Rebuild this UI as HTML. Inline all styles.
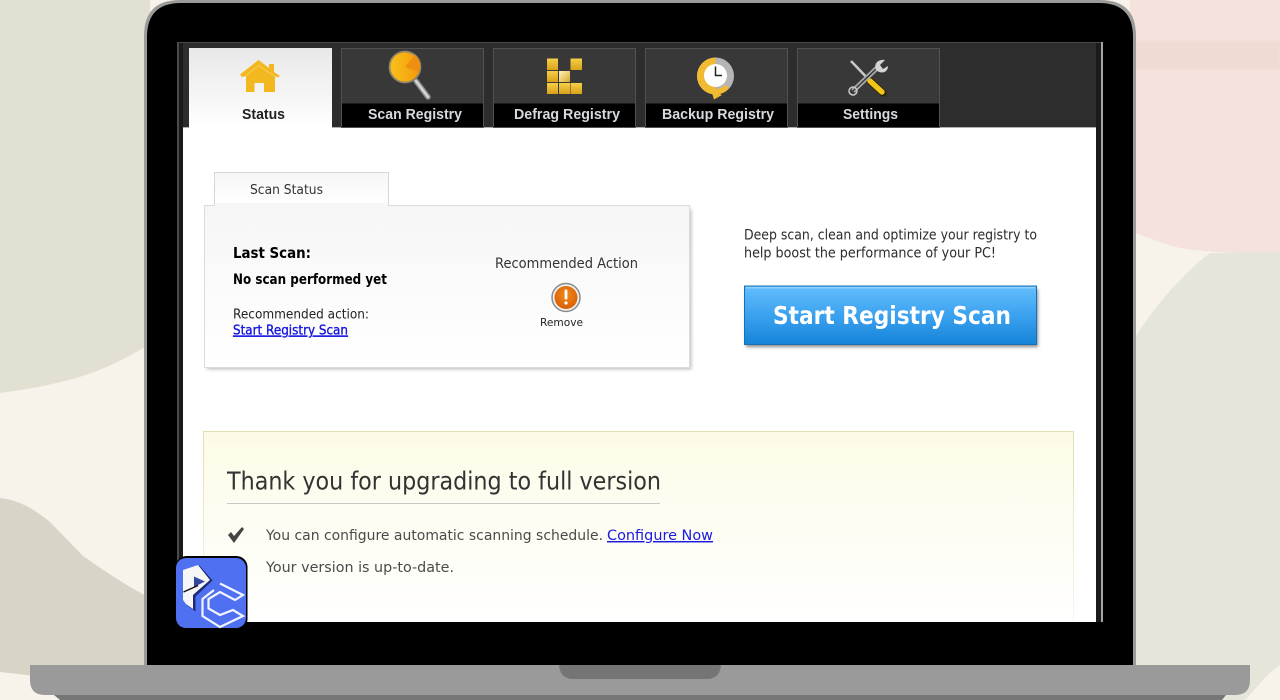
<!DOCTYPE html>
<html><head><meta charset="utf-8"><title>Registry Scan</title>
<style>html,body{margin:0;padding:0;width:1280px;height:700px;overflow:hidden;background:#f8f3ea}svg{display:block}
.d{font-family:"DejaVu Sans",sans-serif}.l{font-family:"Liberation Sans",sans-serif}
</style></head><body>
<svg width="1280" height="700" viewBox="0 0 1280 700" xmlns="http://www.w3.org/2000/svg">
<defs>
<linearGradient id="st" x1="0" y1="0" x2="0" y2="1"><stop offset="0" stop-color="#e8e8e8"/><stop offset=".7" stop-color="#f8f8f8"/><stop offset="1" stop-color="#fff"/></linearGradient>
<linearGradient id="pn" x1="0" y1="0" x2="0" y2="1"><stop offset="0" stop-color="#f6f6f6"/><stop offset="1" stop-color="#fff"/></linearGradient>
<linearGradient id="yl" x1="0" y1="0" x2="0" y2="1"><stop offset="0" stop-color="#fdfbe7"/><stop offset="1" stop-color="#fff"/></linearGradient>
<linearGradient id="bd" x1="0" y1="0" x2="0" y2="1"><stop offset="0" stop-color="#dfdfb0"/><stop offset="1" stop-color="#f6f6f2"/></linearGradient>
<linearGradient id="bt" x1="0" y1="0" x2="0" y2="1"><stop offset="0" stop-color="#63bdfc"/><stop offset=".5" stop-color="#3ba2ef"/><stop offset="1" stop-color="#1684d8"/></linearGradient>
<linearGradient id="mg" x1="0" y1="0" x2="1" y2="0"><stop offset="0" stop-color="#f8c21a"/><stop offset="1" stop-color="#f59a0c"/></linearGradient>
<linearGradient id="sq" x1="0" y1="0" x2="0" y2="1"><stop offset="0" stop-color="#f6cf48"/><stop offset="1" stop-color="#d9a21a"/></linearGradient>
<linearGradient id="sl" x1="0" y1="0" x2="1" y2="1"><stop offset="0" stop-color="#fff3c0"/><stop offset="1" stop-color="#d9a92a"/></linearGradient>
<radialGradient id="ex" cx=".5" cy=".4" r=".6"><stop offset="0" stop-color="#f28a1a"/><stop offset="1" stop-color="#d85f05"/></radialGradient>
<filter id="sh" x="-5%" y="-5%" width="110%" height="110%"><feGaussianBlur stdDeviation="1.500"/></filter>
<filter id="sf" x="-5%" y="-50%" width="110%" height="200%"><feGaussianBlur stdDeviation="1"/></filter>
</defs>

<!-- background -->
<rect width="1280" height="700" fill="#f8f3ea"/>
<path d="M0 0H150V345L143 348C120 362 100 371 73 379C50 385 25 390 0 393Z" fill="#e1e0d2"/>
<path d="M0 498C20 500 35 510 50 522L83 556C100 568 125 585 150 598V680H70L0 672Z" fill="#d9d4c8"/>
<path d="M1130 0H1280V254C1250 254 1200 252 1180 248C1160 243 1145 236 1130 231Z" fill="#f5e2dd"/>
<rect x="1130" y="41" width="150" height="28" fill="#efdad4" filter="url(#sf)"/>
<path d="M1137 335C1155 305 1185 272 1210 253L1280 252V665C1265 675 1255 690 1245 700H1130V340Z" fill="#e5e5da"/>

<!-- laptop -->
<path d="M144 668V36Q144 0 180 0H1100Q1136 0 1136 36V668Z" fill="#9b9b9b"/>
<path d="M147 668V37Q147 3 181 3H1099Q1133 3 1133 37V668Z" fill="#000"/>
<path d="M54 690H1226V695L1222 700H60L54 695Z" fill="#767676"/>
<path d="M30 665H1250V680Q1250 695 1235 695H45Q30 695 30 680Z" fill="#9a9a9a"/>
<path d="M559 665H721Q720 679 707 679H573Q560 679 559 665Z" fill="#767575"/>

<!-- screen -->
<rect x="177" y="42" width="926" height="580" fill="#1a1a1a"/>
<rect x="177" y="42" width="926" height="1" fill="#4a4a4a"/>
<rect x="177" y="42" width="2" height="580" fill="#4a4a4a"/>
<rect x="1101" y="42" width="2" height="580" fill="#a5a5a5"/>
<rect x="183" y="43" width="913" height="85" fill="#2d2d2d"/>
<rect x="183" y="128" width="913" height="494" fill="#fff"/>
<rect x="183" y="127" width="913" height="1" fill="#b0b0b0"/>

<!-- tabs -->
<rect x="189" y="48" width="143" height="80" fill="url(#st)"/>
<g fill="#383838" stroke="#525252">
<rect x="341.500" y="48.500" width="142" height="79"/>
<rect x="493.500" y="48.500" width="142" height="79"/>
<rect x="645.500" y="48.500" width="142" height="79"/>
<rect x="797.500" y="48.500" width="142" height="79"/>
</g>
<g fill="#000">
<rect x="342" y="103.500" width="141" height="23.500"/>
<rect x="494" y="103.500" width="141" height="23.500"/>
<rect x="646" y="103.500" width="141" height="23.500"/>
<rect x="798" y="103.500" width="141" height="23.500"/>
</g>
<g class="l" font-size="14.500" font-weight="700" fill="#d5dade">
<text x="242" y="119" fill="#222" textLength="43" lengthAdjust="spacingAndGlyphs">Status</text>
<text x="368" y="119" textLength="94" lengthAdjust="spacingAndGlyphs">Scan Registry</text>
<text x="514" y="119" textLength="106" lengthAdjust="spacingAndGlyphs">Defrag Registry</text>
<text x="662" y="119" textLength="112" lengthAdjust="spacingAndGlyphs">Backup Registry</text>
<text x="843" y="119" textLength="55" lengthAdjust="spacingAndGlyphs">Settings</text>
</g>

<!-- house -->
<path d="M240 74.500L258.500 60L269 68V64H274V72L280 76L277.500 77.500L275 76V92H264V83H254.500V92H246V76L242 77Z" fill="#f3b81f"/>
<path d="M246 75.500L258.500 65.500L275 76.500" fill="none" stroke="#f8d878" stroke-width=".7"/>

<!-- magnifier -->
<path d="M416 81L428 97" stroke="#8d8d8d" stroke-width="5.500" stroke-linecap="round"/>
<path d="M416 81L428 97" stroke="#d6d6d6" stroke-width="2.500" stroke-linecap="round"/>
<circle cx="405" cy="67" r="15.500" fill="url(#mg)" stroke="#8f8468" stroke-width="1.800"/>
<path d="M405 67L415 55A15 15 0 0 1 419 72Z" fill="#f08e10"/>

<!-- defrag -->
<g fill="url(#sq)">
<rect x="547" y="58.500" width="11" height="11.500"/><rect x="570.500" y="58.500" width="11.500" height="11.500"/>
<rect x="547" y="71" width="11" height="11"/>
<rect x="547" y="83" width="11" height="11"/><rect x="559" y="83" width="11" height="11"/><rect x="570.500" y="83" width="11.500" height="11"/>
</g>
<rect x="559" y="71" width="11" height="11" fill="url(#sl)"/>

<!-- clock -->
<circle cx="715.500" cy="76" r="18.500" fill="#b5b5b5"/>
<path d="M715.500 57.500A18.500 18.500 0 0 0 715.500 94.500C721 94.500 726 92 729 88L725 85C722 88 719 89 715.500 89Z" fill="#f0bb30"/>
<path d="M711 90L722 95L714 99.500Z" fill="#f0bb30"/>
<circle cx="715.500" cy="75.500" r="11.500" fill="#fff"/>
<path d="M715.500 66.500V75.500H722" fill="none" stroke="#222" stroke-width="1.500"/>

<!-- tools -->
<path d="M851 61L873 84" stroke="#c9c9c9" stroke-width="2.500"/>
<path d="M869 80L883 93" stroke="#2b2200" stroke-width="7" stroke-linecap="round"/>
<path d="M870 81L882 92" stroke="#f2c41c" stroke-width="5.500" stroke-linecap="round"/>
<path d="M853 91L877 68" stroke="#aaa" stroke-width="5"/>
<path d="M853 91L877 68" stroke="#3a3a3a" stroke-width="1.500"/>
<circle cx="853" cy="91" r="4" fill="none" stroke="#c9c9c9" stroke-width="1.500"/>
<path d="M876 70C873 62 880 59 885 60L880 65L883 69L888 66C888 72 882 75 876 70Z" fill="#d4d4d4"/>

<!-- scan status panel -->
<rect x="207" y="209" width="484.500" height="160.500" fill="#c2c2c2" filter="url(#sh)"/>
<rect x="204.500" y="205.500" width="485" height="162" fill="url(#pn)" stroke="#dcdcdc"/>
<path d="M214.500 206V172.500H388.500V206" fill="url(#pn)" stroke="#d8d8d8"/>
<rect x="215" y="203" width="173" height="4" fill="#f7f7f7"/>
<g class="d" fill="#222">
<text x="250" y="194" font-size="13.500" fill="#333" textLength="73" lengthAdjust="spacingAndGlyphs">Scan Status</text>
<text x="233" y="258" font-size="15" font-weight="700" fill="#000" textLength="78" lengthAdjust="spacingAndGlyphs">Last Scan:</text>
<text x="233" y="284" font-size="14" font-weight="700" fill="#000" textLength="154" lengthAdjust="spacingAndGlyphs">No scan performed yet</text>
<text x="233" y="318.500" font-size="13" fill="#222" textLength="136" lengthAdjust="spacingAndGlyphs">Recommended action:</text>
<text x="233" y="334.500" font-size="13" fill="#1414e0" stroke="#1414e0" stroke-width=".35" text-decoration="underline" textLength="115" lengthAdjust="spacingAndGlyphs">Start Registry Scan</text>
<text x="495" y="268" font-size="14" fill="#333" textLength="143" lengthAdjust="spacingAndGlyphs">Recommended Action</text>
<text x="540" y="326" font-size="11" fill="#222" textLength="43" lengthAdjust="spacingAndGlyphs">Remove</text>
</g>
<circle cx="566" cy="297.500" r="14" fill="#f0f0f0" stroke="#8a8a8a" stroke-width="1.500"/>
<circle cx="566" cy="297.500" r="11.500" fill="url(#ex)"/>
<rect x="564.600" y="289.500" width="2.800" height="10" rx="1" fill="#fff"/>
<circle cx="566" cy="303" r="1.600" fill="#fff"/>

<!-- right -->
<g class="d" fill="#2c2c2c" font-size="14">
<text x="744" y="239.500" textLength="293" lengthAdjust="spacingAndGlyphs">Deep scan, clean and optimize your registry to</text>
<text x="744" y="257.500" textLength="252" lengthAdjust="spacingAndGlyphs">help boost the performance of your PC!</text>
</g>
<rect x="746" y="289" width="292" height="58" fill="#8a8a8a" filter="url(#sh)"/>
<rect x="744.500" y="286" width="292" height="58.500" fill="url(#bt)" stroke="#1570b5"/>
<rect x="746" y="287" width="289" height="1.500" fill="#8fd0fd"/>
<text x="773" y="324" class="d" font-size="25" font-weight="700" fill="#fff" textLength="238" lengthAdjust="spacingAndGlyphs">Start Registry Scan</text>

<!-- yellow panel -->
<path d="M203.500 622V431.500H1073.500V622" fill="url(#yl)" stroke="url(#bd)"/>
<text x="227" y="489.500" class="d" font-size="25" fill="#333" textLength="434" lengthAdjust="spacingAndGlyphs">Thank you for upgrading to full version</text>
<rect x="227" y="503" width="433" height="1" fill="#c9c9c4"/>
<path d="M228 535L231 532L234 536L242 527L244 529L234 543Z" fill="#444"/>
<g class="d" font-size="14.500" fill="#4a4a4a">
<text x="266" y="540" textLength="337" lengthAdjust="spacingAndGlyphs">You can configure automatic scanning schedule.</text>
<text x="607" y="540" fill="#1a1ae0" text-decoration="underline" textLength="106" lengthAdjust="spacingAndGlyphs">Configure Now</text>
<text x="266" y="572" textLength="188" lengthAdjust="spacingAndGlyphs">Your version is up-to-date.</text>
</g>

<!-- black under screen -->
<rect x="177" y="622" width="926" height="20" fill="#000"/>

<!-- logo -->
<rect x="175.500" y="556" width="72" height="74" rx="11" fill="#000"/>
<rect x="176" y="558" width="70" height="70" rx="10" fill="#4f70f0"/>
<path d="M183 570L198 565L211 580L194 596V611L186 605L183 601Z" fill="#1c2a78" transform="translate(1.500 .5)"/>
<path d="M183 570L198 565L210 580L193 595V609L186 604L183 600Z" fill="#f6f6f6"/>
<path d="M194 576.500L205 581.500L194 587Z" fill="#33479f"/>
<path d="M183.500 592L198 585.500" stroke="#111" stroke-width="1.500"/>
<path d="M220 583.500L243 595L235 600L220 592L208.500 599V608.500L220 615L233 610L243 616L220 627L202.500 616V599L214 590" fill="none" stroke="#f2f4ff" stroke-width="2.200"/>
</svg>
</body></html>
